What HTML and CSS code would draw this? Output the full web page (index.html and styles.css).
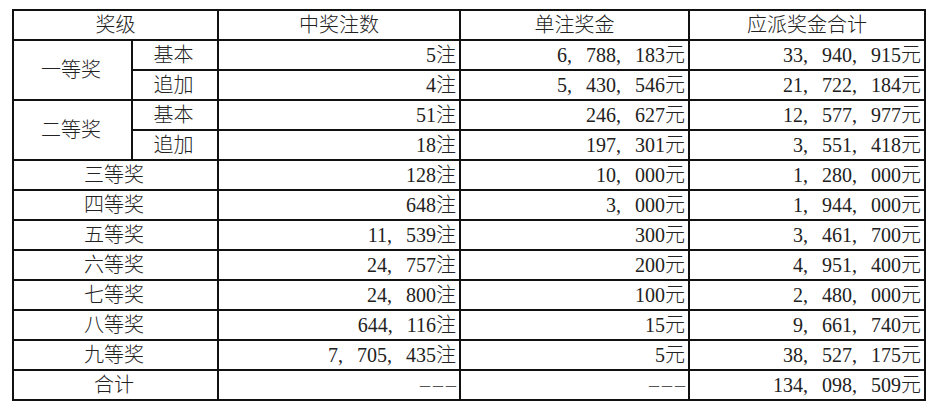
FILE: index.html
```html
<!DOCTYPE html>
<html lang="zh-CN">
<head>
<meta charset="utf-8">
<title>开奖详情</title>
<link rel="stylesheet" href="styles.css">
</head>
<body>
<div class="wrap">
<table class="prize">
<colgroup>
<col class="c1"><col class="c2"><col class="c3"><col class="c4"><col class="c5">
</colgroup>
<thead>
<tr><th colspan="2">奖级</th><th>中奖注数</th><th>单注奖金</th><th>应派奖金合计</th></tr>
</thead>
<tbody>
<tr><td rowspan="2" class="ctr">一等奖</td><td class="ctr">基本</td><td class="num">5注</td><td class="num">6, 788, 183元</td><td class="num">33, 940, 915元</td></tr>
<tr><td class="ctr">追加</td><td class="num">4注</td><td class="num">5, 430, 546元</td><td class="num">21, 722, 184元</td></tr>
<tr><td rowspan="2" class="ctr">二等奖</td><td class="ctr">基本</td><td class="num">51注</td><td class="num">246, 627元</td><td class="num">12, 577, 977元</td></tr>
<tr><td class="ctr">追加</td><td class="num">18注</td><td class="num">197, 301元</td><td class="num">3, 551, 418元</td></tr>
<tr><td colspan="2" class="ctr">三等奖</td><td class="num">128注</td><td class="num">10, 000元</td><td class="num">1, 280, 000元</td></tr>
<tr><td colspan="2" class="ctr">四等奖</td><td class="num">648注</td><td class="num">3, 000元</td><td class="num">1, 944, 000元</td></tr>
<tr><td colspan="2" class="ctr">五等奖</td><td class="num">11, 539注</td><td class="num">300元</td><td class="num">3, 461, 700元</td></tr>
<tr><td colspan="2" class="ctr">六等奖</td><td class="num">24, 757注</td><td class="num">200元</td><td class="num">4, 951, 400元</td></tr>
<tr><td colspan="2" class="ctr">七等奖</td><td class="num">24, 800注</td><td class="num">100元</td><td class="num">2, 480, 000元</td></tr>
<tr><td colspan="2" class="ctr">八等奖</td><td class="num">644, 116注</td><td class="num">15元</td><td class="num">9, 661, 740元</td></tr>
<tr><td colspan="2" class="ctr">九等奖</td><td class="num">7, 705, 435注</td><td class="num">5元</td><td class="num">38, 527, 175元</td></tr>
<tr><td colspan="2" class="ctr">合计</td><td class="num"><span class="dash">–––</span></td><td class="num"><span class="dash">–––</span></td><td class="num">134, 098, 509元</td></tr>
</tbody>
</table>
</div>
</body>
</html>
```
FILE: styles.css
```css
html, body {
  margin: 0;
  padding: 0;
  background: #ffffff;
}
.wrap {
  padding: 9px 0 0 12px;
}
.prize {
  border-collapse: collapse;
  table-layout: fixed;
  width: 914px;
  font-family: "Liberation Serif", "Noto Sans CJK SC", serif;
  font-size: 20px;
  font-weight: 300;
  color: #222222;
}
.c1 { width: 119px; }
.c2 { width: 86px; }
.c3 { width: 242px; }
.c4 { width: 229px; }
.c5 { width: 236px; }
.prize tr {
  height: 30px;
}
.prize th,
.prize td {
  border: 2px solid #111111;
  padding: 0 3px 0 0;
  line-height: 24px;
  white-space: nowrap;
  font-weight: 300;
}
.prize th {
  text-align: center;
  padding: 0;
}
.ctr {
  text-align: center;
  padding: 0;
}
.num {
  text-align: right;
  word-spacing: 9px;
}
.dash {
  letter-spacing: 3px;
  margin-right: -3px;
  color: #555555;
}
```
